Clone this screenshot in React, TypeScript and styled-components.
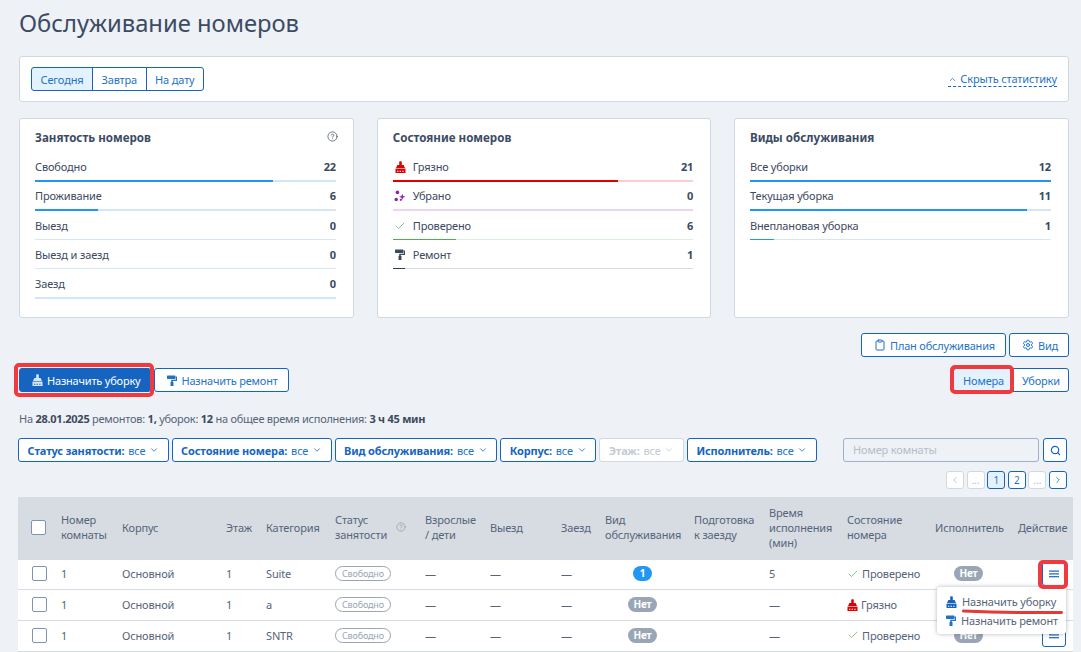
import React from "react";
import styled, { createGlobalStyle } from "styled-components";
import { ChevronDown, ChevronUp, ChevronLeft, ChevronRight, CircleHelp, Search, Settings, Clipboard, Check } from "lucide-react";

const GlobalStyle = createGlobalStyle`
  html, body {
    margin: 0;
    height: 652px;
    overflow: hidden;
    background: #eef1f5;
  }
  body {
    font-family: "Noto Sans", sans-serif;
    font-size: 11px;
    letter-spacing: -0.15px;
    color: #3c4a5f;
  }
  * { box-sizing: border-box; }
  button { letter-spacing: inherit; }
`;

const Page = styled.div`
  position: relative;
  padding: 0 12px 0 19px;
  width: 1081px;
`;

const Title = styled.h1`
  margin: 0;
  height: 56px;
  padding-top: 6px;
  font-size: 23.75px;
  line-height: 34px;
  font-weight: 400;
  letter-spacing: 0;
  color: #3b4b63;
`;

const Panel = styled.div`
  background: #fff;
  border: 1px solid #cfd8e3;
  border-radius: 3px;
`;

const DatePanel = styled(Panel)`
  height: 46px;
  padding: 10px 11px;
  display: flex;
  align-items: flex-start;
  justify-content: space-between;
`;

const Segments = styled.div`
  display: flex;
`;

const Segment = styled.button<{ $active?: boolean }>`
  height: 24px;
  padding: 0 8.5px;
  font: inherit;
  color: #1e73c8;
  background: ${(p) => (p.$active ? "#e3f2fd" : "#fff")};
  border: 1px solid #1565c0;
  margin-left: -1px;
  &:first-child {
    margin-left: 0;
    border-radius: 3px 0 0 3px;
  }
  &:last-child {
    border-radius: 0 3px 3px 0;
  }
`;

const HideLink = styled.a`
  display: flex;
  align-items: center;
  gap: 3px;
  height: 15px;
  margin: 5px 0 0;
  color: #1e73c8;
  line-height: 14px;
  border-bottom: 1px dashed #1565c0;
`;

const Cards = styled.div`
  display: grid;
  grid-template-columns: 335px 334.5px 335px;
  justify-content: space-between;
  margin-top: 16px;
`;

const Card = styled(Panel)`
  position: relative;
  height: 200px;
  padding: 10px 17px 0 15px;
`;

const CardTitle = styled.h3`
  margin: 0 0 6px;
  font-size: 11.6px;
  line-height: 18px;
  font-weight: 700;
  letter-spacing: 0;
  color: #3b4b63;
`;

const HelpSpot = styled.span`
  position: absolute;
  top: 12px;
  right: 15px;
  display: flex;
  color: #3c4a5f;
`;

const StatRow = styled.div`
  height: 29.2px;
  display: flex;
  flex-direction: column;
  justify-content: flex-end;
`;

const StatText = styled.div`
  display: flex;
  align-items: center;
  justify-content: space-between;
  height: 18px;
  line-height: 18px;
  margin-bottom: 4px;
`;

const StatLabel = styled.span`
  display: flex;
  align-items: center;
  gap: 5px;
`;

const StatValue = styled.b`
  font-weight: 700;
`;

const IconSlot = styled.span`
  display: flex;
  justify-content: center;
  width: 15px;
`;

const Track = styled.div<{ $bg: string; $h: number }>`
  height: ${(p) => p.$h}px;
  background: ${(p) => p.$bg};
  margin-bottom: ${(p) => 2 - p.$h}px;
`;

const Fill = styled.div<{ $color: string }>`
  height: 100%;
  background: ${(p) => p.$color};
`;

const Toolbar = styled.div`
  display: flex;
  justify-content: space-between;
  margin-top: 15px;
`;

const ToolLeft = styled.div`
  display: flex;
  align-items: flex-start;
  gap: 3px;
  padding-top: 35px;
`;

const ToolRight = styled.div`
  display: flex;
  flex-direction: column;
  align-items: flex-end;
  gap: 11px;
`;

const ToolRow = styled.div`
  display: flex;
  gap: 3px;
`;

const Btn = styled.button<{ $primary?: boolean }>`
  position: relative;
  display: flex;
  align-items: center;
  gap: 4px;
  height: 24px;
  padding: 0 10px 0 12px;
  font: inherit;
  letter-spacing: -0.2px;
  color: ${(p) => (p.$primary ? "#fff" : "#1e73c8")};
  background: ${(p) => (p.$primary ? "#1565c0" : "#fff")};
  border: 1px solid #1565c0;
  border-radius: 3px;
`;

const ViewTabs = styled.div`
  display: flex;
`;

const ViewTab = styled.button<{ $active?: boolean }>`
  position: relative;
  height: 24px;
  padding: 0 ${(p) => (p.$active ? "9px" : "8px")};
  font: inherit;
  color: #1e73c8;
  background: ${(p) => (p.$active ? "#e3f2fd" : "#fff")};
  border: 1px solid #1565c0;
  border-radius: ${(p) => (p.$active ? "3px 0 0 3px" : "0 3px 3px 0")};
  margin-left: ${(p) => (p.$active ? "0" : "-1px")};
`;

// red marks drawn on top of the screenshot
const RedFrame = styled.span<{ $inset: string }>`
  position: absolute;
  inset: ${(p) => p.$inset};
  border: 4px solid #ef3b3f;
  border-radius: 5px;
  pointer-events: none;
  z-index: 3;
`;

const Summary = styled.div`
  margin-top: 18px;
  height: 18px;
  line-height: 18px;
  letter-spacing: -0.25px;
  color: #56647a;
  b { color: #3c4a5f; font-weight: 700; }
`;

const FilterBar = styled.div`
  display: flex;
  justify-content: space-between;
  margin: 10px 2px 0 -1px;
`;

const Filters = styled.div`
  display: flex;
  gap: 3px;
`;

const Filter = styled.button<{ $disabled?: boolean }>`
  display: flex;
  align-items: center;
  gap: 3.8px;
  height: 24px;
  padding: 0 8.5px;
  font: inherit;
  white-space: nowrap;
  color: ${(p) => (p.$disabled ? "#c3cad5" : "#1e73c8")};
  background: #fff;
  border: 1px solid ${(p) => (p.$disabled ? "#cfd8e3" : "#1565c0")};
  border-radius: 3px;
  b {
    font-weight: 700;
    color: ${(p) => (p.$disabled ? "#c3cad5" : "#1565c0")};
  }
`;

const SearchBox = styled.div`
  display: flex;
  gap: 4px;
`;

const SearchInput = styled.div`
  width: 196px;
  height: 24px;
  padding-left: 9px;
  line-height: 22px;
  color: #b6bdc9;
  background: #eef1f5;
  border: 1px solid #9fb0c8;
  border-radius: 3px;
`;

const SearchBtn = styled.button`
  display: flex;
  align-items: center;
  justify-content: center;
  width: 24px;
  height: 24px;
  padding: 0;
  color: #1565c0;
  background: #fff;
  border: 1px solid #1565c0;
  border-radius: 3px;
`;

const Pager = styled.div`
  display: flex;
  justify-content: flex-end;
  gap: 2.6px;
  margin: 9px 2px 0 0;
`;

const PageBtn = styled.span<{ $state?: "off" | "on" }>`
  display: flex;
  align-items: center;
  justify-content: center;
  width: 18px;
  height: 18px;
  font-size: 10px;
  color: ${(p) => (p.$state === "off" ? "#b6bdc9" : "#1e73c8")};
  background: ${(p) => (p.$state === "on" ? "#e3f2fd" : "#fff")};
  border: 1px solid ${(p) => (p.$state === "off" ? "#cfd8e3" : "#1565c0")};
  border-radius: 3px;
`;

const COLS = "43px 61px 104px 40px 69px 90px 65px 71px 44px 89px 75px 78px 88px 83px 55px";

const Table = styled.div`
  position: relative;
  width: 1055px;
  margin: 8px 0 0 -1px;
`;

const HeadRow = styled.div`
  display: grid;
  grid-template-columns: ${COLS};
  align-items: center;
  height: 62.5px;
  padding-bottom: 2px;
  background: #d7dce3;
  line-height: 15px;
  color: #56647a;
`;

const Row = styled.div`
  display: grid;
  grid-template-columns: ${COLS};
  align-items: center;
  height: 30.7px;
  padding-bottom: 1px;
  background: #fff;
  border-bottom: 1px solid #d7dce3;
  color: #56647a;
`;

const Box = styled.span<{ $head?: boolean }>`
  display: block;
  width: 15px;
  height: 15px;
  margin-left: ${(p) => (p.$head ? "13px" : "14px")};
  background: #fff;
  border: 1px solid #7f93b2;
  border-radius: 2px;
`;

const HeadHelp = styled.span`
  display: flex;
  align-items: center;
  gap: 9px;
  color: #9aa5b5;
  span { color: #56647a; }
`;

const StatusTag = styled.span`
  justify-self: start;
  padding: 0 6px;
  height: 15px;
  line-height: 13px;
  font-size: 9px;
  color: #9aa5b5;
  border: 1px solid #9aa5b5;
  border-radius: 8px;
`;

const Pill = styled.span<{ $blue?: boolean; $left: number }>`
  justify-self: start;
  margin-left: ${(p) => p.$left}px;
  min-width: ${(p) => (p.$blue ? "19px" : "29px")};
  height: 15px;
  line-height: 15px;
  text-align: center;
  font-size: 10px;
  font-weight: 700;
  color: #fff;
  background: ${(p) => (p.$blue ? "#2196f3" : "#9aa5b5")};
  border-radius: 8px;
`;

const StateCell = styled.span`
  display: flex;
  align-items: center;
  gap: 3px;
`;

const ActionBtn = styled.button`
  position: relative;
  display: flex;
  align-items: center;
  justify-content: center;
  width: 24px;
  height: 24px;
  margin-left: 24px;
  padding: 0;
  color: #1565c0;
  background: #fff;
  border: 1px solid #1565c0;
  border-radius: 3px;
`;

const DropMenu = styled.div`
  position: absolute;
  left: 919px;
  top: 90px;
  width: 129px;
  height: 47px;
  padding: 5px 0 0 9px;
  background: #fff;
  border-radius: 3px;
  box-shadow: 0 0 4px rgba(60, 74, 95, 0.4);
  z-index: 2;
`;

const MenuItem = styled.div`
  display: flex;
  align-items: center;
  gap: 5px;
  height: 19px;
  color: #56647a;
  white-space: nowrap;
`;

const Stroke = styled.svg`
  position: absolute;
  left: 25px;
  top: 22px;
`;

const BrushIcon = ({ color, dash = "#fff" }: { color: string; dash?: string }) => (
  <svg width="11" height="12" viewBox="0 0 11 12" fill={color}>
    <path d="M4.2 0.6 Q5.5 -0.2 6.8 0.6 V4 H8.6 L10 7 H1 L2.4 4 H4.2z" />
    <path d="M0.5 7.6h10V12h-10z" />
    <path d="M2 9.8h1.4v1H2zm2.6 0H6v1H4.6zm2.6 0h1.4v1H7.2z" fill={dash} />
  </svg>
);

const RollerIcon = ({ color }: { color: string }) => (
  <svg width="10" height="11" viewBox="0 0 10 11" fill={color}>
    <rect x="0" y="0.5" width="8.4" height="3.5" rx="0.4" />
    <path d="M8.4 1.4H10V6H5.8V7H4.2V4.8H8.8V2.6H8.4z" />
    <rect x="3.5" y="7" width="3" height="4" rx="0.3" />
  </svg>
);

const SparkIcon = () => (
  <svg width="12" height="12" viewBox="0 0 14 14" fill="#8e24aa">
    <circle cx="4" cy="2.8" r="2.1" />
    <circle cx="2.6" cy="11" r="2" />
    <circle cx="8" cy="11.4" r="1.3" />
    <path d="M9.6 4.4l1 2.5 2.6 1-2.6 1-1 2.4-1-2.4-2.5-1 2.5-1z" />
  </svg>
);

const BarsIcon = () => (
  <svg width="10" height="8" viewBox="0 0 10 8" fill="currentColor">
    <rect y="0.5" width="10" height="1.2" />
    <rect y="3.3" width="10" height="1.2" />
    <rect y="6.1" width="10" height="1.2" />
  </svg>
);

const CheckIcon = () => <Check size={12} color="#4caf50" strokeWidth={1.4} />;

const Stat = ({ icon, label, value, pct, bg, color, h }: {
  icon?: React.ReactNode; label: string; value: number; pct: number; bg: string; color: string; h: number;
}) => (
  <StatRow>
    <StatText>
      <StatLabel>
        {icon && <IconSlot>{icon}</IconSlot>}
        {label}
      </StatLabel>
      <StatValue>{value}</StatValue>
    </StatText>
    <Track $bg={bg} $h={h}>
      <Fill $color={color} style={{ width: `${pct}%` }} />
    </Track>
  </StatRow>
);

const BLUE = { bg: "#d3e6f8", color: "#2196f3" };

const App = () => {
  return (
    <Page>
      <GlobalStyle />
      <Title>Обслуживание номеров</Title>
      <DatePanel>
        <Segments>
          <Segment $active>Сегодня</Segment>
          <Segment>Завтра</Segment>
          <Segment>На дату</Segment>
        </Segments>
        <HideLink>
          <ChevronUp size={9} />
          Скрыть статистику
        </HideLink>
      </DatePanel>

      <Cards>
        <Card>
          <CardTitle>Занятость номеров</CardTitle>
          <HelpSpot>
            <CircleHelp size={11} strokeWidth={1.6} />
          </HelpSpot>
          <Stat label="Свободно" value={22} pct={79} h={2} {...BLUE} />
          <Stat label="Проживание" value={6} pct={21} h={2} {...BLUE} />
          <Stat label="Выезд" value={0} pct={0} h={1} {...BLUE} />
          <Stat label="Выезд и заезд" value={0} pct={0} h={1} {...BLUE} />
          <Stat label="Заезд" value={0} pct={0} h={2} {...BLUE} />
        </Card>
        <Card>
          <CardTitle>Состояние номеров</CardTitle>
          <Stat icon={<BrushIcon color="#e00000" />} label="Грязно" value={21} pct={75} h={2} bg="#fbcdd0" color="#e00000" />
          <Stat icon={<SparkIcon />} label="Убрано" value={0} pct={0} h={2} bg="#ecd5ee" color="#8e24aa" />
          <Stat icon={<CheckIcon />} label="Проверено" value={6} pct={21} h={1} bg="#dcefdd" color="#4caf50" />
          <Stat icon={<RollerIcon color="#3c4a5f" />} label="Ремонт" value={1} pct={4} h={1} bg="#d8dade" color="#2f3d55" />
        </Card>
        <Card>
          <CardTitle>Виды обслуживания</CardTitle>
          <Stat label="Все уборки" value={12} pct={100} h={2} {...BLUE} />
          <Stat label="Текущая уборка" value={11} pct={92} h={2} {...BLUE} />
          <Stat label="Внеплановая уборка" value={1} pct={8} h={1} {...BLUE} />
        </Card>
      </Cards>

      <Toolbar>
        <ToolLeft>
          <Btn $primary>
            <BrushIcon color="#d6e6f7" dash="#1565c0" />
            Назначить уборку
            <RedFrame $inset="-6px -4px -6px -6px" />
          </Btn>
          <Btn>
            <RollerIcon color="#1e73c8" />
            Назначить ремонт
          </Btn>
        </ToolLeft>
        <ToolRight>
          <ToolRow>
            <Btn>
              <Clipboard size={12} strokeWidth={2} />
              План обслуживания
            </Btn>
            <Btn>
              <Settings size={12} />
              Вид
            </Btn>
          </ToolRow>
          <ViewTabs>
            <ViewTab $active>
              Номера
              <RedFrame $inset="-4px -1px -3px -4px" />
            </ViewTab>
            <ViewTab>Уборки</ViewTab>
          </ViewTabs>
        </ToolRight>
      </Toolbar>

      <Summary>
        На <b>28.01.2025</b> ремонтов: <b>1,</b> уборок: <b>12</b> на общее время исполнения: <b>3 ч 45 мин</b>
      </Summary>

      <FilterBar>
        <Filters>
          <Filter><b>Статус занятости:</b> все <ChevronDown size={10} /></Filter>
          <Filter><b>Состояние номера:</b> все <ChevronDown size={10} /></Filter>
          <Filter><b>Вид обслуживания:</b> все <ChevronDown size={10} /></Filter>
          <Filter><b>Корпус:</b> все <ChevronDown size={10} /></Filter>
          <Filter $disabled><b>Этаж:</b> все <ChevronDown size={10} /></Filter>
          <Filter><b>Исполнитель:</b> все <ChevronDown size={10} /></Filter>
        </Filters>
        <SearchBox>
          <SearchInput>Номер комнаты</SearchInput>
          <SearchBtn><Search size={11} strokeWidth={2.6} /></SearchBtn>
        </SearchBox>
      </FilterBar>

      <Pager>
        <PageBtn $state="off"><ChevronLeft size={10} /></PageBtn>
        <PageBtn $state="off">...</PageBtn>
        <PageBtn $state="on">1</PageBtn>
        <PageBtn>2</PageBtn>
        <PageBtn $state="off">...</PageBtn>
        <PageBtn><ChevronRight size={10} /></PageBtn>
      </Pager>

      <Table>
        <HeadRow>
          <Box $head />
          <span>Номер<br />комнаты</span>
          <span>Корпус</span>
          <span>Этаж</span>
          <span>Категория</span>
          <HeadHelp><span>Статус<br />занятости</span><CircleHelp size={10} /></HeadHelp>
          <span>Взрослые<br />/ дети</span>
          <span>Выезд</span>
          <span>Заезд</span>
          <span>Вид<br />обслуживания</span>
          <span>Подготовка<br />к заезду</span>
          <span>Время<br />исполнения<br />(мин)</span>
          <span>Состояние<br />номера</span>
          <span>Исполнитель</span>
          <span>Действие</span>
        </HeadRow>
        <Row>
          <Box />
          <span>1</span>
          <span>Основной</span>
          <span>1</span>
          <span>Suite</span>
          <StatusTag>Свободно</StatusTag>
          <span>—</span>
          <span>—</span>
          <span>—</span>
          <Pill $blue $left={28}>1</Pill>
          <span />
          <span>5</span>
          <StateCell><CheckIcon /> Проверено</StateCell>
          <Pill $left={19}>Нет</Pill>
          <ActionBtn>
            <BarsIcon />
            <RedFrame $inset="-3px -3px -4px -5px" />
          </ActionBtn>
        </Row>
        <Row>
          <Box />
          <span>1</span>
          <span>Основной</span>
          <span>1</span>
          <span>a</span>
          <StatusTag>Свободно</StatusTag>
          <span>—</span>
          <span>—</span>
          <span>—</span>
          <Pill $left={23}>Нет</Pill>
          <span />
          <span>—</span>
          <StateCell><BrushIcon color="#e00000" /> Грязно</StateCell>
          <Pill $left={19}>Нет</Pill>
          <ActionBtn><BarsIcon /></ActionBtn>
        </Row>
        <Row>
          <Box />
          <span>1</span>
          <span>Основной</span>
          <span>1</span>
          <span>SNTR</span>
          <StatusTag>Свободно</StatusTag>
          <span>—</span>
          <span>—</span>
          <span>—</span>
          <Pill $left={23}>Нет</Pill>
          <span />
          <span>—</span>
          <StateCell><CheckIcon /> Проверено</StateCell>
          <Pill $left={19}>Нет</Pill>
          <ActionBtn><BarsIcon /></ActionBtn>
        </Row>
        <DropMenu>
          <MenuItem><BrushIcon color="#1565c0" /> Назначить уборку</MenuItem>
          <MenuItem><RollerIcon color="#1e73c8" /> Назначить ремонт</MenuItem>
          <Stroke width="101" height="6" viewBox="0 0 101 6">
            <path d="M1.5 2 C30 3.2 70 3.8 99.5 3.4" stroke="#e53935" strokeWidth="3" fill="none" strokeLinecap="round" />
          </Stroke>
        </DropMenu>
      </Table>
    </Page>
  );
};

export default App;
